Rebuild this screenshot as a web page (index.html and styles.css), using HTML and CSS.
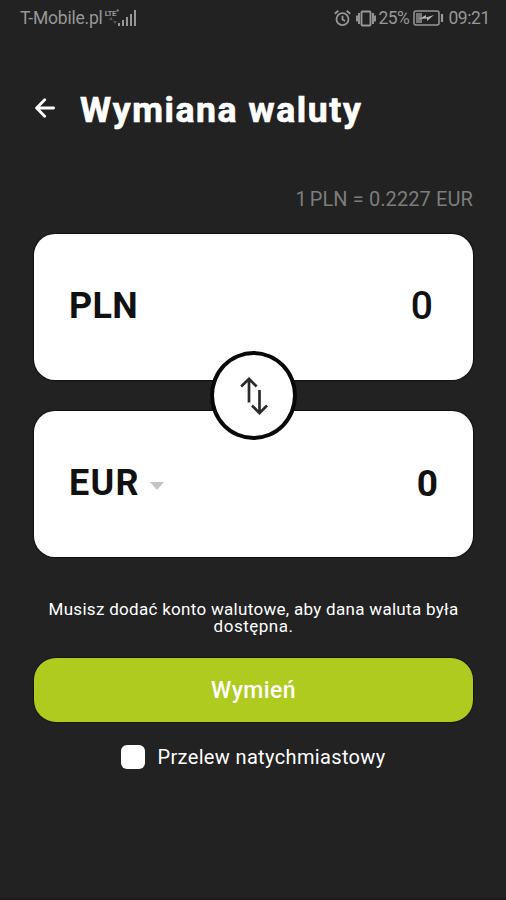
FILE: index.html
```
<!DOCTYPE html>
<html lang="pl">
<head>
    <meta charset="UTF-8">
    <meta name="viewport" content="width=device-width, initial-scale=1.0">
    <title>Wymiana waluty</title>
    <link rel="stylesheet" href="styles.css">
</head>
<body>

    <div class="status-bar">
        <div class="carrier">
            <span class="carrier-name">T-Mobile.pl</span>
            <span class="lte">LTE<sup>+</sup></span>
            <svg class="signal" width="19" height="16" viewBox="0 0 19 16" fill="#979797">
                <rect x="1" y="13" width="2" height="3"/>
                <rect x="5" y="10" width="2" height="6"/>
                <rect x="9" y="7" width="2" height="9"/>
                <rect x="13" y="4" width="2" height="12"/>
                <rect x="17" y="0" width="2" height="16"/>
                <path d="M-8 10l2-3 2 3zM-4 11h4l-2 3z" fill="#555"/>
            </svg>
        </div>
        <div class="indicators">
            <svg class="alarm" width="17" height="17" viewBox="0 0 17 17" fill="none" stroke="#979797" stroke-width="1.8">
                <circle cx="8.5" cy="9.2" r="6"/>
                <path d="M8.5 5.8v3.7l2.6 1.6M.8 3.8l3.5-3M16.2 3.8l-3.5-3"/>
            </svg>
            <svg class="vibrate" width="20" height="17" viewBox="0 0 20 17" fill="none" stroke="#979797" stroke-width="1.9">
                <rect x="5.5" y="1.5" width="9" height="14" rx="1"/>
                <path d="M3 3v11M17 3v11M1 5.5v6M19 5.5v6"/>
            </svg>
            <span class="percent">25%</span>
            <svg class="battery" width="31" height="16" viewBox="0 0 31 16" fill="none" stroke="#979797" stroke-width="1.5">
                <rect x="1" y="1" width="25" height="14" rx="2"/>
                <rect x="3" y="3" width="6" height="10" fill="#777" stroke="none"/>
                <path d="M29 4v8" stroke-width="2.2"/>
                <path d="M6 9l7-4v2.500l8-2.500-7 6V8.500z" fill="#b5b5b5" stroke="none"/>
            </svg>
            <span class="time">09:21</span>
        </div>
    </div>

    <header class="header">
        <svg class="back" width="20" height="20" viewBox="0 0 20 20" fill="none" stroke="#fff" stroke-width="2.8" stroke-linecap="round" stroke-linejoin="round">
            <path d="M18.600 10H2M9.700 1.800L1.600 10l8.100 8.200"/>
        </svg>
        <h1>Wymiana waluty</h1>
    </header>

    <main class="exchange">
        <p class="rate"><span class="rate-one">1</span>PLN = 0.2227 EUR</p>

        <div class="cards">
            <div class="card">
                <span class="currency pln">PLN</span>
                <span class="amount from">0</span>
            </div>
            <div class="card">
                <span class="currency eur">EUR</span>
                <span class="caret"></span>
                <span class="amount to">0</span>
            </div>
            <button class="swap" aria-label="Zamień">
                <svg width="28" height="38" viewBox="0 0 28 38" fill="none" stroke="#2b2b2b" stroke-width="2.700">
                    <path d="M9 25.500V2M1.200 9.500L9 1.900l7.600 7.600"/>
                    <path d="M19.500 13v23M12 28.500l7.500 7.600 7.500-7.600"/>
                </svg>
            </button>
        </div>

        <p class="hint">Musisz dodać konto walutowe, aby dana waluta była <span class="hint-end">dostępna.</span></p>

        <button class="submit">Wymień</button>

        <label class="instant">
            <input type="checkbox">
            <span>Przelew natychmiastowy</span>
        </label>
    </main>

</body>
</html>
```

FILE: styles.css
```
* {
    box-sizing: border-box;
}

body {
    margin: 0;
    height: 100vh;
    overflow: hidden;
    background: #222;
    border-bottom: 2px solid #1e191b;
    color: white;
    font-family: Roboto, "Liberation Sans", sans-serif;
}

.status-bar {
    display: flex;
    justify-content: space-between;
    height: 36px;
    padding: 0 16px 0 20px;
    color: #979797;
    font-size: 17.5px;
}

.carrier,
.indicators {
    display: flex;
    align-items: center;
}

.carrier-name {
    letter-spacing: -0.2px;
}

.lte {
    align-self: flex-start;
    margin: 9px 0 0 2px;
    width: 12px;
    font-size: 8px;
    font-weight: bold;
    line-height: 9px;
    letter-spacing: -0.5px;
    white-space: nowrap;
}

.lte sup {
    font-size: 6px;
    line-height: 0;
}

.signal {
    margin-top: -1px;
    overflow: visible;
}

.alarm {
    margin-right: 1px;
}

.vibrate {
    margin: 0 2px 0 4px;
}

.percent {
    letter-spacing: -0.5px;
}

.battery {
    margin: 0 4px;
}

.time {
    letter-spacing: -0.4px;
}

.header {
    display: flex;
    align-items: center;
    height: 60px;
    margin-top: 43px;
    padding-left: 35px;
}

.back {
    margin-top: -3px;
}

.header h1 {
    margin: 2px 0 0 25px;
    font-size: 35.5px;
    line-height: 40px;
    letter-spacing: 1.6px;
    -webkit-text-stroke: 0.7px white;
}

.exchange {
    padding: 0 33px 0 34px;
}

.rate {
    margin: 48px 0 0;
    height: 24px;
    color: #7d7d7d;
    font-size: 20px;
    line-height: 24px;
    letter-spacing: 0.1px;
    text-align: right;
}

.rate-one {
    margin-right: 3px;
}

.cards {
    position: relative;
    display: flex;
    flex-direction: column;
    gap: 31px;
    margin-top: 23px;
}

.card {
    display: flex;
    align-items: center;
    height: 146px;
    padding: 0 35px;
    border-radius: 21px;
    background: white;
    box-shadow: 0 0 1px 1px #111;
    color: #111;
}

.currency {
    margin-top: -2px;
    font-size: 36px;
    font-weight: bold;
}

.pln {
    letter-spacing: 0.3px;
}

.eur {
    letter-spacing: 1.3px;
}

.caret {
    margin: 3px 0 0 10px;
    border: 7px solid transparent;
    border-top: 8px solid #c4c4c4;
    border-bottom: 0;
}

.amount {
    margin: -2px 0 0 auto;
}

.from {
    margin-right: 5px;
    font-size: 39px;
    font-weight: 500;
}

.to {
    font-size: 37px;
    font-weight: bold;
}

/* sits over the gap between both cards */
.swap {
    position: absolute;
    top: 117px;
    left: 176px;
    display: flex;
    align-items: center;
    justify-content: center;
    width: 87px;
    height: 89px;
    padding: 0;
    border: 4px solid #080808;
    border-radius: 50%;
    background: white;
}

.hint {
    margin: 44px 0 0;
    font-size: 17px;
    line-height: 17px;
    letter-spacing: 0.3px;
    text-align: center;
}

.hint-end {
    display: block;
    letter-spacing: 0.5px;
}

.submit {
    display: block;
    width: 100%;
    height: 64px;
    margin-top: 23px;
    padding: 0;
    border: 0;
    border-radius: 22px;
    background: #afcb1f;
    box-shadow: 0 0 1px 1px #171a10;
    color: white;
    font-family: inherit;
    font-size: 23px;
    font-weight: 500;
    letter-spacing: 0.4px;
}

.instant {
    display: flex;
    align-items: center;
    justify-content: center;
    gap: 12px;
    margin-top: 23px;
    font-size: 20px;
    line-height: 24px;
    letter-spacing: 0.35px;
}

.instant input {
    appearance: none;
    width: 24px;
    height: 24px;
    margin: 0;
    border-radius: 6px;
    background: white;
}
```
